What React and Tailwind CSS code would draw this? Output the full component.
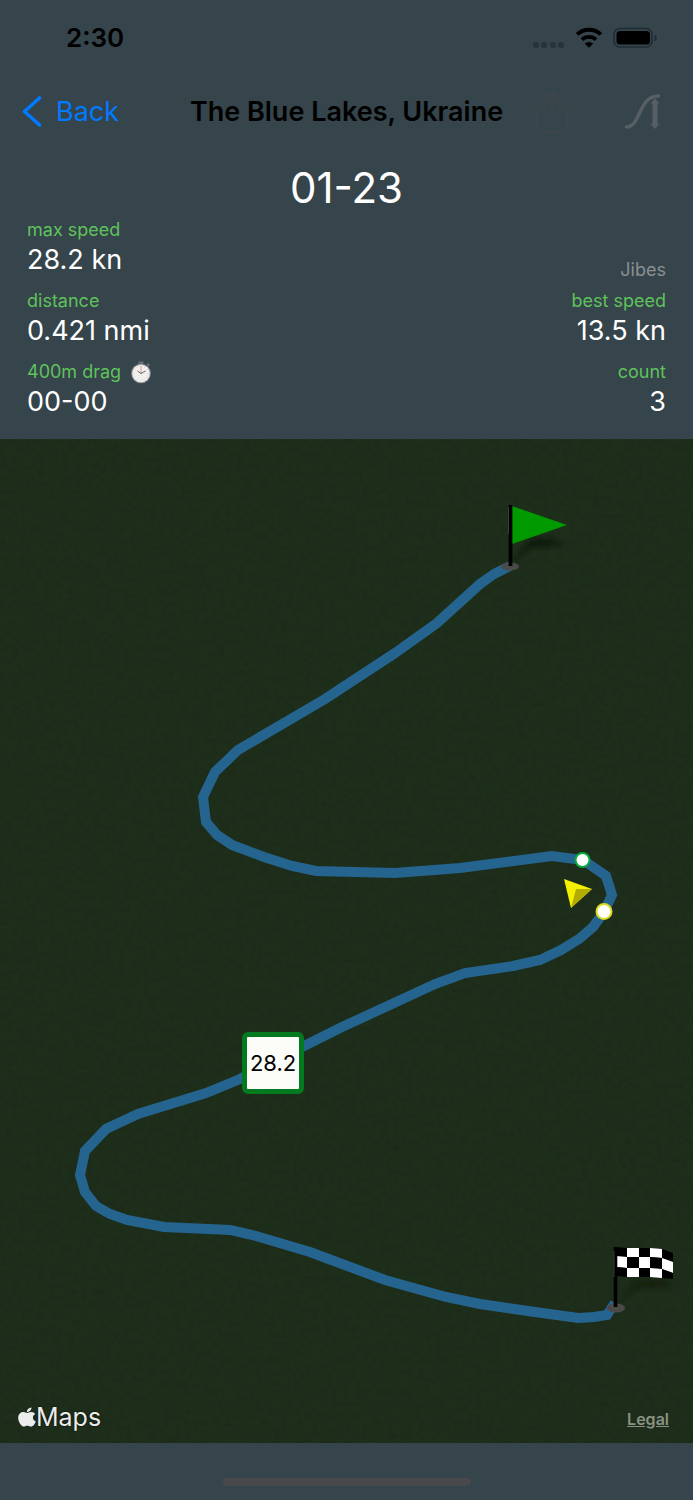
import { FaApple } from "react-icons/fa";

const TRACK =
  "510,127 494,135 480,145 437,184 395,214 325,260 238,311 215,333 203,358 206,383 217,396 232,406 264,418 292,427 316,432 395,434 460,429 552,417 583,421 606,437 612,456 604,473 593,488 579,500 561,511 540,521 513,527 465,534 435,545 340,589 300,609 240,640 206,654 138,675 106,690 85,712 80,736 85,753 96,767 110,775 127,781 164,788 230,791 256,797 310,813 385,841 446,858 480,865 535,873 578,879 594,878 607,876 615,864";

const STATS = [
  { label: "max speed", value: "28.2 kn" },
  { label: "distance", value: "0.421 nmi" },
  { label: "400m drag", value: "00-00", icon: true },
];

const JIBES = [
  { label: "best speed", value: "13.5 kn" },
  { label: "count", value: "3" },
];

function StatusBar() {
  return (
    <div className="flex h-[76px] items-center justify-between pr-[35px] pl-[66px] text-black">
      <span className="text-[26px] leading-8 font-semibold">2:30</span>
      <div className="flex items-center">
        <svg width="32" height="20" viewBox="0 0 32 20" fill="#27343b">
          <rect x="0" y="14" width="6" height="6" rx="2" />
          <rect x="8" y="14" width="6" height="6" rx="2" />
          <rect x="17" y="14" width="6" height="6" rx="2" />
          <rect x="25" y="14" width="6" height="6" rx="2" />
        </svg>
        <svg className="ml-2.5" width="28" height="22" viewBox="0 0 28 22" fill="none" stroke="#000">
          <path d="M2.2 7.4a17 17 0 0 1 23.6 0" strokeWidth="4" />
          <path d="M7 12.6a10.200 10.200 0 0 1 14 0" strokeWidth="3.8" />
          <path d="M14 20.800l-4.200-4.200a6 6 0 0 1 8.400 0z" fill="#000" stroke="none" />
        </svg>
        <svg className="ml-2.5" width="45" height="22" viewBox="0 0 45 22">
          <rect x="1" y="1.500" width="38" height="18.500" rx="6" fill="none" stroke="#202c34" strokeWidth="1.600" />
          <rect x="3.500" y="4" width="33.500" height="13.500" rx="3.500" fill="#000" />
          <path d="M41.500 7.500c3 1.500 3 5.500 0 7z" fill="#202c34" />
        </svg>
      </div>
    </div>
  );
}

function NavBar() {
  return (
    <nav className="grid h-[71px] grid-cols-[1fr_auto_1fr] items-center px-[22px]">
      <button type="button" className="flex items-center gap-3.5 text-[27px] leading-8 text-[#007aff]">
        <svg width="20" height="32" viewBox="0 0 20 32" fill="none" stroke="currentColor" strokeWidth="3.600" strokeLinecap="round" strokeLinejoin="round">
          <path d="M17.500 2 2.500 15.500l15 13.500" />
        </svg>
        Back
      </button>
      <h1 className="text-[27px] leading-8 font-semibold whitespace-nowrap text-black">The Blue Lakes, Ukraine</h1>
      <div className="flex items-center justify-between pr-2.5 pl-8">
        <button type="button" aria-label="Share">
          <svg width="34" height="42" viewBox="0 0 34 42" fill="none" stroke="#3f464b" strokeWidth="1.800" strokeLinecap="round" strokeLinejoin="round">
            <path d="M11 13.500H5.500a3.500 3.500 0 0 0-3.500 3.500v20a3.500 3.500 0 0 0 3.500 3.500h23a3.500 3.500 0 0 0 3.500-3.500V17a3.500 3.500 0 0 0-3.500-3.500H23M17 26V1.500M10 8l7-6.500L24 8" />
          </svg>
        </button>
        <button type="button" aria-label="Altitude">
          <svg width="37" height="36" viewBox="0 0 37 36" fill="none" stroke="#575f66">
            <path d="M2.500 33C17 33 14 2 34.500 2" strokeWidth="3.400" strokeLinecap="round" />
            <path d="M31 8v22" strokeWidth="5" />
            <path d="m31 4.500 4.500 5h-9zM31 35l4.500-5h-9z" fill="#575f66" stroke="none" />
          </svg>
        </button>
      </div>
    </nav>
  );
}

function Stopwatch() {
  return (
    <svg width="20" height="24" viewBox="0 0 20 24">
      <path d="M7.500 1.500h5v3h-5zM15.500 4.500l2-1.500 1.500 2-1.500 1.500z" fill="#667078" />
      <circle cx="10" cy="13.500" r="9.800" fill="#8c9296" />
      <circle cx="10" cy="13.500" r="8.800" fill="#f1f0ec" />
      <circle cx="10" cy="13.500" r="7" fill="none" stroke="#c9c9c5" strokeWidth="1" strokeDasharray="1 2.600" />
      <path d="M10 13.500V6" stroke="#e58f84" strokeWidth="0.900" />
      <path d="m6.500 11 3.500 2.500 4.500-2.500" fill="none" stroke="#666" strokeWidth="1" />
    </svg>
  );
}

function Stat({ label, value, icon }) {
  return (
    <div>
      <dt className="flex items-center gap-2.5 text-[18px] leading-6 text-[#5fc25c]">
        {label}
        {icon && <Stopwatch />}
      </dt>
      <dd className="text-[27px] leading-9 text-white">{value}</dd>
    </div>
  );
}

function Summary() {
  return (
    <section className="px-[27px] pt-4 pb-[19px]">
      <h2 className="text-center text-[42px] leading-[50px] text-white">01-23</h2>
      <div className="mt-[5px] flex justify-between">
        <dl className="flex flex-col gap-[11px]">
          {STATS.map((s) => (
            <Stat key={s.label} {...s} />
          ))}
        </dl>
        <div className="flex flex-col items-end justify-end gap-[11px] text-right">
          <h3 className="text-[18px] leading-4 text-[#8b8f92]">Jibes</h3>
          <dl className="flex flex-col items-end gap-[11px] [&_dt]:justify-end">
            {JIBES.map((s) => (
              <Stat key={s.label} {...s} />
            ))}
          </dl>
        </div>
      </div>
    </section>
  );
}

function FinishFlag() {
  // the right end of the cloth droops a little
  const columns = [
    [616, 627, 808, 809],
    [627, 639, 809, 809],
    [639, 650, 809, 809],
    [650, 662, 809, 810],
    [662, 673, 810, 814],
  ];
  const rows = [0, 9, 20, 29];
  return (
    <g>
      <path d="M619 864 635 850l36-2-4-8-32 2z" fill="#14200f" filter="url(#soft)" />
      <ellipse cx="616" cy="869" rx="9" ry="4.500" fill="#4b4a48" />
      {columns.map(([x1, x2, y1, y2], c) =>
        [0, 1, 2].map((r) => {
          const end = r === 2 && c === 4 ? -3 : 0;
          return (
            <path
              key={`${c}-${r}`}
              d={`M${x1} ${y1 + rows[r]}L${x2} ${y2 + rows[r]}L${x2} ${y2 + rows[r + 1] + end}L${x1} ${y1 + rows[r + 1]}z`}
              fill={(r + c) % 2 ? "#fff" : "#000"}
            />
          );
        })
      )}
      <path d="M615.500 808v60" stroke="#000" strokeWidth="3.600" />
      <path d="M614 812v26" stroke="#3b3e3b" strokeWidth="1" />
    </g>
  );
}

function StartFlag() {
  return (
    <g>
      <path d="M513 122 530 109l33-3-12-7-20 1z" fill="#101b0d" filter="url(#soft)" />
      <ellipse cx="510" cy="127.500" rx="9" ry="4" fill="#4b4a48" />
      <path d="M512 67 567 86 512 105z" fill="#009a00" />
      <path d="M510.500 66v61" stroke="#000" strokeWidth="3.800" />
      <path d="M508.500 68v27" stroke="#3b3e3b" strokeWidth="1" />
    </g>
  );
}

function TrackMap() {
  return (
    <main className="relative bg-[#1d2e1b]">
      <svg className="block w-full" viewBox="0 0 693 1004" role="img" aria-label="Track">
        <defs>
          <filter id="soft" x="-30%" y="-50%" width="160%" height="200%">
            <feGaussianBlur stdDeviation="2" />
          </filter>
          <filter id="ground" x="0" y="0" width="100%" height="100%" colorInterpolationFilters="sRGB">
            <feTurbulence type="fractalNoise" baseFrequency="0.16" numOctaves="3" seed="4" />
            <feColorMatrix values="0 0 0 0 0.12  0 0 0 0 0.14  0 0 0 0 0.08  0 3 0 0 -1.45" />
          </filter>
        </defs>
        <rect width="693" height="1004" filter="url(#ground)" opacity="0.3" />
        <polyline points={TRACK} fill="none" stroke="#25648f" strokeWidth="10" strokeLinejoin="miter" />
        <StartFlag />
        <FinishFlag />
        <circle cx="582.500" cy="421" r="7" fill="#fff" stroke="#08a83a" strokeWidth="2" />
        <circle cx="604" cy="472.500" r="7.500" fill="#fff" stroke="#dada20" strokeWidth="2" />
        <path d="m564 440 28 10-21 19z" fill="#f4f000" />
        <path d="m576 450 16 0-21 19z" fill="#b0ac00" />
      </svg>
      <div className="absolute top-[62.200%] left-[39.400%] flex size-[62px] -translate-x-1/2 -translate-y-1/2 items-center justify-center rounded-md border-[5px] border-[#027a20] bg-[#fcfdf8] text-[22px] leading-7 text-black">
        28.2
      </div>
      <div className="absolute bottom-3 left-[18px] flex items-center text-[25px] leading-7 text-[#ececec] [text-shadow:0_0_2px_#000]">
        <FaApple className="h-[22px] w-[18px]" preserveAspectRatio="none" />
        Maps
      </div>
      <a href="#legal" className="absolute right-6 bottom-3.5 text-[16px] leading-5 font-semibold text-[#899283] underline">
        Legal
      </a>
    </main>
  );
}

export default function App() {
  return (
    <div className="min-h-screen bg-[#36444b] font-['Inter',sans-serif]">
      <StatusBar />
      <NavBar />
      <Summary />
      <TrackMap />
      <footer className="flex h-[57px] items-end justify-center pb-3.5">
        <div className="h-2 w-[248px] rounded-full bg-[#48494b]" />
      </footer>
    </div>
  );
}
